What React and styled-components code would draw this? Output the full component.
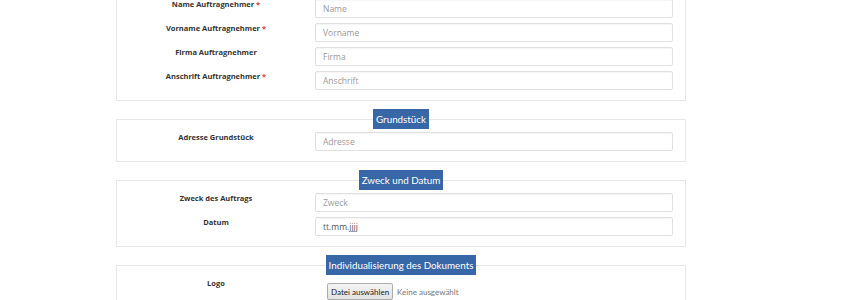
import React from 'react';
import styled, { createGlobalStyle } from 'styled-components';

const GlobalStyle = createGlobalStyle`
  html, body {
    margin: 0;
    padding: 0;
    background: #fff;
    overflow: hidden;
  }
  body {
    font-family: "Open Sans", "Liberation Sans", sans-serif;
  }
`;

const sections = [
  {
    legend: null,
    rows: [
      { label: 'Name Auftragnehmer', required: true, placeholder: 'Name' },
      { label: 'Vorname Auftragnehmer', required: true, placeholder: 'Vorname' },
      { label: 'Firma Auftragnehmer', placeholder: 'Firma' },
      { label: 'Anschrift Auftragnehmer', required: true, placeholder: 'Anschrift' },
    ],
  },
  {
    legend: 'Grundstück',
    rows: [{ label: 'Adresse Grundstück', placeholder: 'Adresse' }],
  },
  {
    legend: 'Zweck und Datum',
    rows: [
      { label: 'Zweck des Auftrags', placeholder: 'Zweck' },
      { label: 'Datum', date: true },
    ],
  },
  {
    legend: 'Individualisierung des Dokuments',
    rows: [{ label: 'Logo', file: true }],
  },
];

function Field({ row }) {
  if (row.file) {
    return (
      <FileControl>
        <FileButton type="button">Datei auswählen</FileButton>
        <FileStatus>Keine ausgewählt</FileStatus>
      </FileControl>
    );
  }
  if (row.date) {
    return <Input type="text" defaultValue="tt.mm.jjjj" spellCheck={false} readOnly />;
  }
  return <Input type="text" placeholder={row.placeholder} spellCheck={false} />;
}

export default function App() {
  return (
    <>
      <GlobalStyle />
      <Page>
        {sections.map((section, i) => (
          <Fieldset key={i} $hasLegend={!!section.legend}>
            {section.legend && <Legend>{section.legend}</Legend>}
            {section.rows.map((row) => (
              <Row key={row.label}>
                <Label>
                  {row.label}
                  {row.required && <Required> *</Required>}
                </Label>
                <Field row={row} />
              </Row>
            ))}
          </Fieldset>
        ))}
      </Page>
    </>
  );
}

const Page = styled.div`
  width: 570px;
  margin: -15px 0 0 116px;
  display: flex;
  flex-direction: column;
  gap: 8px;
`;

const Fieldset = styled.fieldset`
  margin: 0;
  min-width: 0;
  border: 1px solid #e6e6e6;
  padding: ${(p) => (p.$hasLegend ? '3px' : '13px')} 0 10px 0;
  display: flex;
  flex-direction: column;
  gap: 5px;
`;

const Legend = styled.legend`
  margin: 0 auto;
  padding: 0 3px;
  height: 20px;
  line-height: 20px;
  background: #3767a7;
  color: #fff;
  font-family: Lato, "Open Sans", sans-serif;
  font-size: 9.8px;
`;

const Row = styled.div`
  display: grid;
  grid-template-columns: 198px 1fr;
  align-items: start;
  padding-right: 12px;
`;

const Label = styled.label`
  text-align: center;
  font-size: 7.5px;
  font-weight: 700;
  color: #333;
  line-height: 9px;
  padding-top: 1px;
`;

const Required = styled.span`
  color: #d9383a;
`;

const Input = styled.input`
  box-sizing: border-box;
  width: 100%;
  height: 19px;
  margin: 0;
  padding: 0 7px;
  border: 1px solid #e0e0e0;
  border-radius: 2px;
  box-shadow: inset 0 1px 1px rgba(0, 0, 0, 0.04);
  font-family: "Open Sans", sans-serif;
  font-size: 8.5px;
  color: #555;
  outline: none;

  &::placeholder {
    color: #9a9a9a;
  }
`;

const FileControl = styled.div`
  display: flex;
  align-items: center;
  gap: 4px;
  padding: 5px 0 0 12px;
`;

const FileButton = styled.button`
  height: 17px;
  padding: 0 3px;
  border: 1px solid #adadad;
  border-radius: 2px;
  background: linear-gradient(#f4f4f4, #e2e2e2);
  color: #222;
  font-family: Lato, "Open Sans", sans-serif;
  font-size: 8px;
`;

const FileStatus = styled.span`
  font-family: Lato, "Open Sans", sans-serif;
  font-size: 8px;
  color: #777;
`;
